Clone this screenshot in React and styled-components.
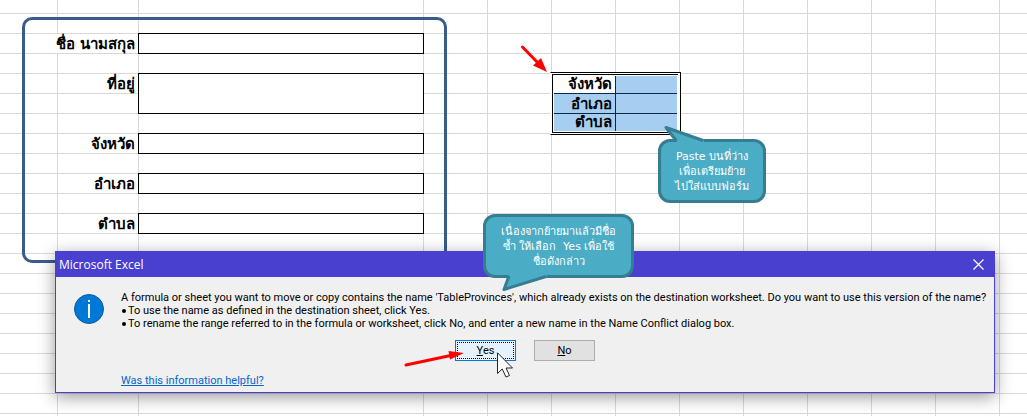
import React from 'react';
import styled, { createGlobalStyle } from 'styled-components';

const GlobalStyle = createGlobalStyle`
  * { box-sizing: border-box; }
  body { margin: 0; background: #fff; font-family: Roboto, "DejaVu Sans", sans-serif; font-size: 11px; color: #000; }
`;

const line = '#d9d9d9';
const thaiFont = '"DejaVu Sans", "Noto Sans", sans-serif';

const Sheet = styled.main`
  position: relative;
  display: flex;
  align-items: flex-start;
  gap: 103px;
  min-height: 100vh;
  padding: 17px 0 0 22px;
  overflow: hidden;
  background-color: #fff;
  background-image:
    linear-gradient(${line}, ${line}),
    linear-gradient(${line}, ${line}),
    repeating-linear-gradient(to right, ${line} 0 1px, transparent 1px 64px),
    repeating-linear-gradient(to bottom, ${line} 0 1px, transparent 1px 20px);
  background-size: 1px 100%, 1px 100%, 100% 100%, 100% 100%;
  background-position: 57px 0, 138px 0, 423px 0, 0 13px;
  background-repeat: no-repeat;
`;

const Form = styled.form`
  flex: none;
  display: grid;
  grid-template-columns: 113px 286px;
  row-gap: 19px;
  padding: 13px 20px 26px 0;
  border: 3px solid #385d8a;
  border-radius: 10px;
`;

const Label = styled.label`
  justify-self: end;
  align-self: start;
  height: 21px;
  padding: 0 2px;
  border: 1px solid transparent;
  background: ${(p) => (p.$spill ? '#fff' : 'transparent')};
  background-clip: padding-box;
  font-family: ${thaiFont};
  font-size: 15px;
  font-weight: 700;
  line-height: 20px;
  white-space: nowrap;
`;

const Field = styled.input`
  display: block;
  width: 100%;
  height: 21px;
  margin: 0;
  padding: 0 3px;
  border: 1px solid #000;
  border-radius: 0;
  background: #fff;
  font: inherit;
  resize: none;
`;

const TallField = styled(Field)`
  height: 41px;
`;

const Range = styled.div`
  flex: none;
  margin-top: 55px;
  padding: 1px 2px 1px 1px;
  border: 1px solid #000;
  border-left-color: #fff;
  background: #fff;
`;

const RangeTable = styled.table`
  width: 126px;
  padding: 1px;
  border: 1px solid #000;
  border-right: 0;
  border-spacing: 0;
  table-layout: fixed;
`;

const RangeCell = styled.td`
  height: ${(p) => p.$h}px;
  padding: 0;
  border-bottom: ${(p) => (p.$last ? '0' : '1px solid #0b2a4a')};
  background: #a5cef0;
`;

const RangeHead = styled(RangeCell)`
  width: 62px;
  padding-right: 3px;
  border-right: 1px solid #0b2a4a;
  background: ${(p) => (p.$active ? '#fff' : '#a5cef0')};
  font-family: ${thaiFont};
  font-size: 15px;
  font-weight: 700;
  line-height: 17px;
  text-align: right;
  vertical-align: bottom;
`;

const Callout = styled.aside`
  position: absolute;
  z-index: 2;
  left: ${(p) => p.$x}px;
  top: ${(p) => p.$y}px;
  width: ${(p) => p.$w}px;
  height: 64px;
  padding-top: 7px;
  border: 3px solid #357d91;
  border-radius: 12px;
  background: #4bacc6;
  color: #fff;
  font-family: ${thaiFont};
  font-size: 11px;
  line-height: 15px;
  text-align: center;
  white-space: nowrap;
`;

const Overlay = styled.svg`
  position: absolute;
  z-index: 3;
  left: ${(p) => p.$x}px;
  top: ${(p) => p.$y}px;
  overflow: visible;
  pointer-events: none;
`;

const Dialog = styled.section`
  position: absolute;
  z-index: 1;
  left: 55px;
  right: 32px;
  top: 251px;
  border: 1px solid #4940cf;
  background: #f0f0f0;
  box-shadow: 0 4px 16px rgba(0, 0, 0, 0.4);
`;

const TitleBar = styled.header`
  display: flex;
  align-items: center;
  justify-content: space-between;
  height: 25px;
  padding: 0 10px 0 3px;
  background: #4940cf;
  color: #fff;
`;

const Title = styled.h1`
  margin: 0;
  font-family: "Open Sans", sans-serif;
  font-size: 12px;
  font-weight: 400;
  line-height: 24px;
`;

const Close = styled.button`
  display: flex;
  padding: 0;
  border: 0;
  background: none;
  color: #fff;
`;

const Body = styled.div`
  display: grid;
  grid-template-columns: 30px minmax(0, 1fr);
  column-gap: 17px;
  padding: 14px 18px 4px;
`;

const InfoIcon = styled.svg`
  margin-top: 3px;
`;

const Message = styled.div`
  height: 49px;
  line-height: 13px;
  white-space: nowrap;
`;

const Lead = styled.p`
  margin: 0;
`;

const Choices = styled.ul`
  margin: 0;
  padding: 0;
  list-style: none;
`;

const Choice = styled.li`
  display: flex;
  align-items: center;
  gap: 2px;

  &::before {
    content: '';
    width: 4px;
    height: 4px;
    margin-left: 1px;
    border-radius: 50%;
    background: #000;
  }
`;

const Actions = styled.div`
  grid-column: 1 / -1;
  display: flex;
  justify-content: center;
  gap: 18px;
`;

const Button = styled.button`
  width: 61px;
  height: 21px;
  padding: 1px;
  border: 1px solid ${(p) => (p.$primary ? '#0078d7' : '#adadad')};
  background: ${(p) => (p.$primary ? '#e5f1fb' : '#e1e1e1')};
  color: #000;
  font: inherit;
  line-height: 15px;
`;

const FocusRing = styled.span`
  display: block;
  border: 1px dotted ${(p) => (p.$on ? '#000' : 'transparent')};
`;

const HelpLink = styled.a`
  grid-column: 2;
  justify-self: start;
  margin-top: 13px;
  color: #0066cc;
  line-height: 14px;
`;

const rows = [
  { name: 'จังหวัด', height: 18, active: true },
  { name: 'อำเภอ', height: 20 },
  { name: 'ตำบล', height: 17, last: true },
];

export default function App() {
  return (
    <Sheet>
      <GlobalStyle />
      <Form>
        <Label htmlFor="name" $spill>ชื่อ นามสกุล</Label>
        <Field id="name" />
        <Label htmlFor="address">ที่อยู่</Label>
        <TallField as="textarea" id="address" />
        <Label htmlFor="province">จังหวัด</Label>
        <Field id="province" />
        <Label htmlFor="district">อำเภอ</Label>
        <Field id="district" />
        <Label htmlFor="subdistrict">ตำบล</Label>
        <Field id="subdistrict" />
      </Form>

      <Range>
        <RangeTable>
          <tbody>
            {rows.map((r) => (
              <tr key={r.name}>
                <RangeHead as="th" scope="row" $h={r.height} $active={r.active} $last={r.last}>{r.name}</RangeHead>
                <RangeCell $h={r.height} $last={r.last} />
              </tr>
            ))}
          </tbody>
        </RangeTable>
      </Range>

      <Dialog role="dialog" aria-labelledby="title">
        <TitleBar>
          <Title id="title">Microsoft Excel</Title>
          <Close aria-label="Close">
            <svg width="11" height="11" viewBox="0 0 11 11" fill="none" stroke="currentColor" strokeWidth="1.2">
              <path d="M.5.5l10 10M10.5.5l-10 10" />
            </svg>
          </Close>
        </TitleBar>
        <Body>
          <InfoIcon width="30" height="30" viewBox="0 0 30 30">
            <circle cx="15" cy="15" r="14.5" fill="#0078d7" stroke="#0f5a9c" />
            <path d="M14 6h2v2h-2zM14 10h2v14h-2z" fill="#fff" />
          </InfoIcon>
          <Message>
            <Lead>A formula or sheet you want to move or copy contains the name 'TableProvinces', which already exists on the destination worksheet. Do you want to use this version of the name?</Lead>
            <Choices>
              <Choice>To use the name as defined in the destination sheet, click Yes.</Choice>
              <Choice>To rename the range referred to in the formula or worksheet, click No, and enter a new name in the Name Conflict dialog box.</Choice>
            </Choices>
          </Message>
          <Actions>
            <Button type="button" $primary><FocusRing $on><u>Y</u>es</FocusRing></Button>
            <Button type="button"><FocusRing><u>N</u>o</FocusRing></Button>
          </Actions>
          <HelpLink href="#help">Was this information helpful?</HelpLink>
        </Body>
      </Dialog>

      <Callout $x={658} $y={139} $w={108}>
        Paste บนที่ว่าง<br />เพื่อเตรียมย้าย<br />ไปใส่แบบฟอร์ม
      </Callout>
      <Overlay $x={658} $y={120} width="108" height="30">
        <path d="M19 22L8 7.500L46 20.500V23H19z" fill="#4bacc6" />
        <path d="M18.500 21L8 7.500L45 20.500" fill="none" stroke="#357d91" strokeWidth="3" strokeLinejoin="round" />
      </Overlay>

      <Callout $x={483} $y={214} $w={151}>
        เนื่องจากย้ายมาแล้วมีชื่อ<br />ซ้ำ ให้เลือก &nbsp;Yes เพื่อใช้<br />ชื่อดังกล่าว
      </Callout>
      <Overlay $x={483} $y={270} width="151" height="24">
        <path d="M26 4L21 19.500L64 6.500V4z" fill="#4bacc6" />
        <path d="M26 6L21 19.500L63 6.500" fill="none" stroke="#357d91" strokeWidth="3" strokeLinejoin="round" />
      </Overlay>

      <Overlay $x={520} $y={44} width="28" height="29">
        <path d="M2.500 3L18 19" stroke="#f00" strokeWidth="3" strokeLinecap="round" />
        <path d="M27 28L13 21.500L21 14z" fill="#f00" />
      </Overlay>
      <Overlay $x={403} $y={350} width="62" height="18">
        <path d="M3 15L50 5" stroke="#f00" strokeWidth="3" strokeLinecap="round" />
        <path d="M61 3L47 9.500L45.500 1z" fill="#f00" />
      </Overlay>
      <Overlay $x={497} $y={352} width="17" height="26" viewBox="0 0 17 26">
        <path d="M.5.8V21.500L5.200 17L9 25L12.500 23.500L9 16H15.500z" fill="#fff" stroke="#223" />
      </Overlay>
    </Sheet>
  );
}
